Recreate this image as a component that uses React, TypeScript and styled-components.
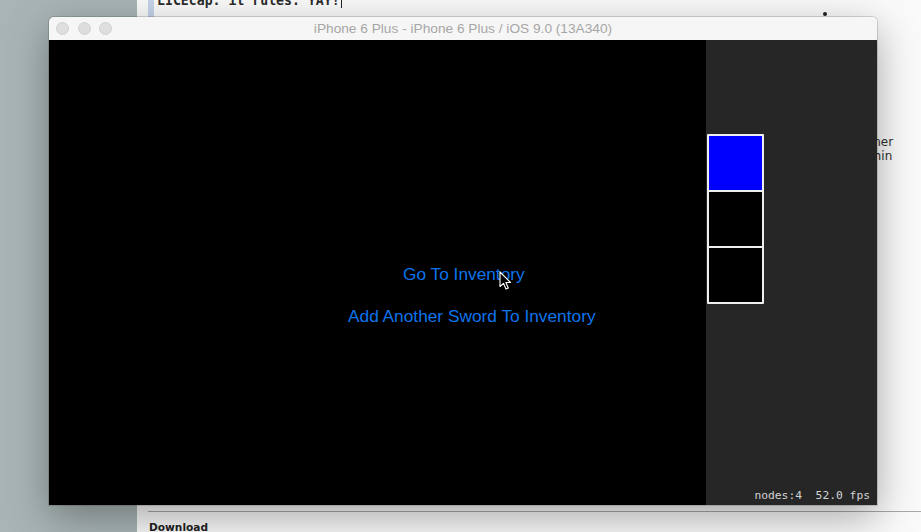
import React from "react";
import styled, { createGlobalStyle } from "styled-components";

const Global = createGlobalStyle`
  html, body { margin: 0; padding: 0; }
  body { width: 921px; height: 532px; overflow: hidden; background: #a9b5b5; }
  #root { width: 921px; height: 532px; }
`;

const Desktop = styled.div`
  position: relative;
  width: 921px;
  height: 532px;
  display: flex;
  overflow: hidden;
  background: #a9b5b5;
`;

const DesktopStrip = styled.div`
  width: 137px;
  flex: none;
  background: #a9b5b5;
`;

const Editor = styled.div`
  flex: 1;
  display: flex;
  flex-direction: column;
  background: #fafafa;
  padding-left: 11px;
`;

const TopLine = styled.div`
  height: 17px;
  display: flex;
  align-items: flex-start;
  overflow: hidden;
`;

const Gutter = styled.div`
  width: 6px;
  height: 17px;
  background: #c4d4ea;
`;

const CodeText = styled.div`
  margin-top: -6px;
  margin-left: 3px;
  font-family: "DejaVu Sans Mono", monospace;
  font-weight: bold;
  font-size: 13.2px;
  line-height: 14px;
  color: #2c2c2c;
  white-space: pre;
`;

const Caret = styled.span`
  display: inline-block;
  width: 1px;
  height: 14px;
  background: #222;
  vertical-align: top;
  margin-left: 1px;
`;

const EditorBody = styled.div`
  flex: 1;
  position: relative;
  display: flex;
  justify-content: flex-end;
  padding-top: 118px;
`;

const SideNotes = styled.div`
  width: 67px;
  font-family: "DejaVu Sans", sans-serif;
  font-size: 12px;
  line-height: 14px;
  color: #303030;
`;

const Bullet = styled.div`
  position: absolute;
  left: 675px;
  top: -5px;
  width: 4px;
  height: 4px;
  border-radius: 50%;
  background: #222;
`;

const Footer = styled.div`
  height: 20px;
  border-top: 1px solid #a8a8a8;
  overflow: hidden;
`;

const FooterTitle = styled.div`
  padding-top: 9px;
  margin-left: 1px;
  font-family: "DejaVu Sans", sans-serif;
  font-weight: bold;
  font-size: 10.6px;
  color: #222;
`;

const SimWindow = styled.div`
  position: absolute;
  left: 49px;
  top: 17px;
  width: 828px;
  height: 488px;
  display: flex;
  flex-direction: column;
  border-radius: 5px 5px 0 0;
  overflow: hidden;
  box-shadow: 0 12px 42px rgba(0, 0, 0, 0.34), 0 0 0 1px rgba(0, 0, 0, 0.14);
`;

const TitleBar = styled.div`
  height: 23px;
  flex: none;
  display: grid;
  grid-template-columns: 1fr auto 1fr;
  align-items: center;
  background: #f6f6f6;
`;

const Lights = styled.div`
  display: flex;
  gap: 8.5px;
  padding-left: 7px;
`;

const Light = styled.span`
  width: 11px;
  height: 11px;
  border-radius: 50%;
  background: #dedede;
  border: 0.5px solid #d0d0d0;
`;

const Title = styled.div`
  font-family: "Liberation Sans", Arial, sans-serif;
  font-size: 13.7px;
  color: #a6a6a6;
  white-space: nowrap;
`;

const Screen = styled.div`
  position: relative;
  flex: 1;
  display: flex;
`;

const Scene = styled.div`
  flex: 1;
  background: #000;
  display: flex;
  flex-direction: column;
  align-items: flex-start;
  padding-top: 224px;
  gap: 22px;
`;

const SceneButton = styled.div<{ $indent: number }>`
  margin-left: ${(p) => p.$indent}px;
  font-family: "Liberation Sans", Arial, sans-serif;
  font-size: 17.3px;
  line-height: 20px;
  color: #0d74ec;
  white-space: nowrap;
`;

const DebugPanel = styled.div`
  width: 171px;
  flex: none;
  background: #262626;
  display: flex;
  flex-direction: column;
  justify-content: space-between;
  padding-top: 94px;
  padding-bottom: 3px;
  box-sizing: border-box;
`;

const NodeStack = styled.div`
  margin-left: 1px;
  width: 53px;
  display: flex;
  flex-direction: column;
  gap: 2px;
  padding: 2px;
  background: #eeeeee;
  border-radius: 1px;
`;

const NodeCell = styled.div<{ $fill: string }>`
  height: 54px;
  background: ${(p) => p.$fill};
`;

const Stats = styled.div`
  align-self: flex-end;
  padding-right: 7px;
  font-family: "DejaVu Sans Mono", monospace;
  font-size: 11.3px;
  line-height: 13px;
  color: #d4d4d4;
  white-space: pre;
`;

const Cursor = styled.svg`
  position: absolute;
  left: 450px;
  top: 231px;
`;

export default function App() {
  return (
    <>
      <Global />
      <Desktop>
        <DesktopStrip />
        <Editor>
          <TopLine>
            <Gutter />
            <CodeText>
              LICEcap: it rules. YAY!<Caret />
            </CodeText>
          </TopLine>
          <EditorBody>
            <Bullet />
            <SideNotes>
              <div>Owner</div>
              <div>Admin</div>
            </SideNotes>
          </EditorBody>
          <Footer>
            <FooterTitle>Download</FooterTitle>
          </Footer>
        </Editor>
        <SimWindow>
          <TitleBar>
            <Lights>
              <Light />
              <Light />
              <Light />
            </Lights>
            <Title>iPhone 6 Plus - iPhone 6 Plus / iOS 9.0 (13A340)</Title>
            <span />
          </TitleBar>
          <Screen>
            <Scene>
              <SceneButton $indent={354}>Go To Inventory</SceneButton>
              <SceneButton $indent={299}>Add Another Sword To Inventory</SceneButton>
            </Scene>
            <DebugPanel>
              <NodeStack>
                <NodeCell $fill="#0000ff" />
                <NodeCell $fill="#000000" />
                <NodeCell $fill="#000000" />
              </NodeStack>
              <Stats>nodes:4  52.0 fps</Stats>
            </DebugPanel>
            <Cursor width="13" height="19" viewBox="0 0 13 19">
              <path
                d="M1 1 L1 15.5 L4.5 12.3 L7 18 L9.3 17 L6.9 11.5 L11.6 11.5 Z"
                fill="#000"
                stroke="#fff"
                strokeWidth="1.1"
                strokeLinejoin="round"
              />
            </Cursor>
          </Screen>
        </SimWindow>
      </Desktop>
    </>
  );
}
